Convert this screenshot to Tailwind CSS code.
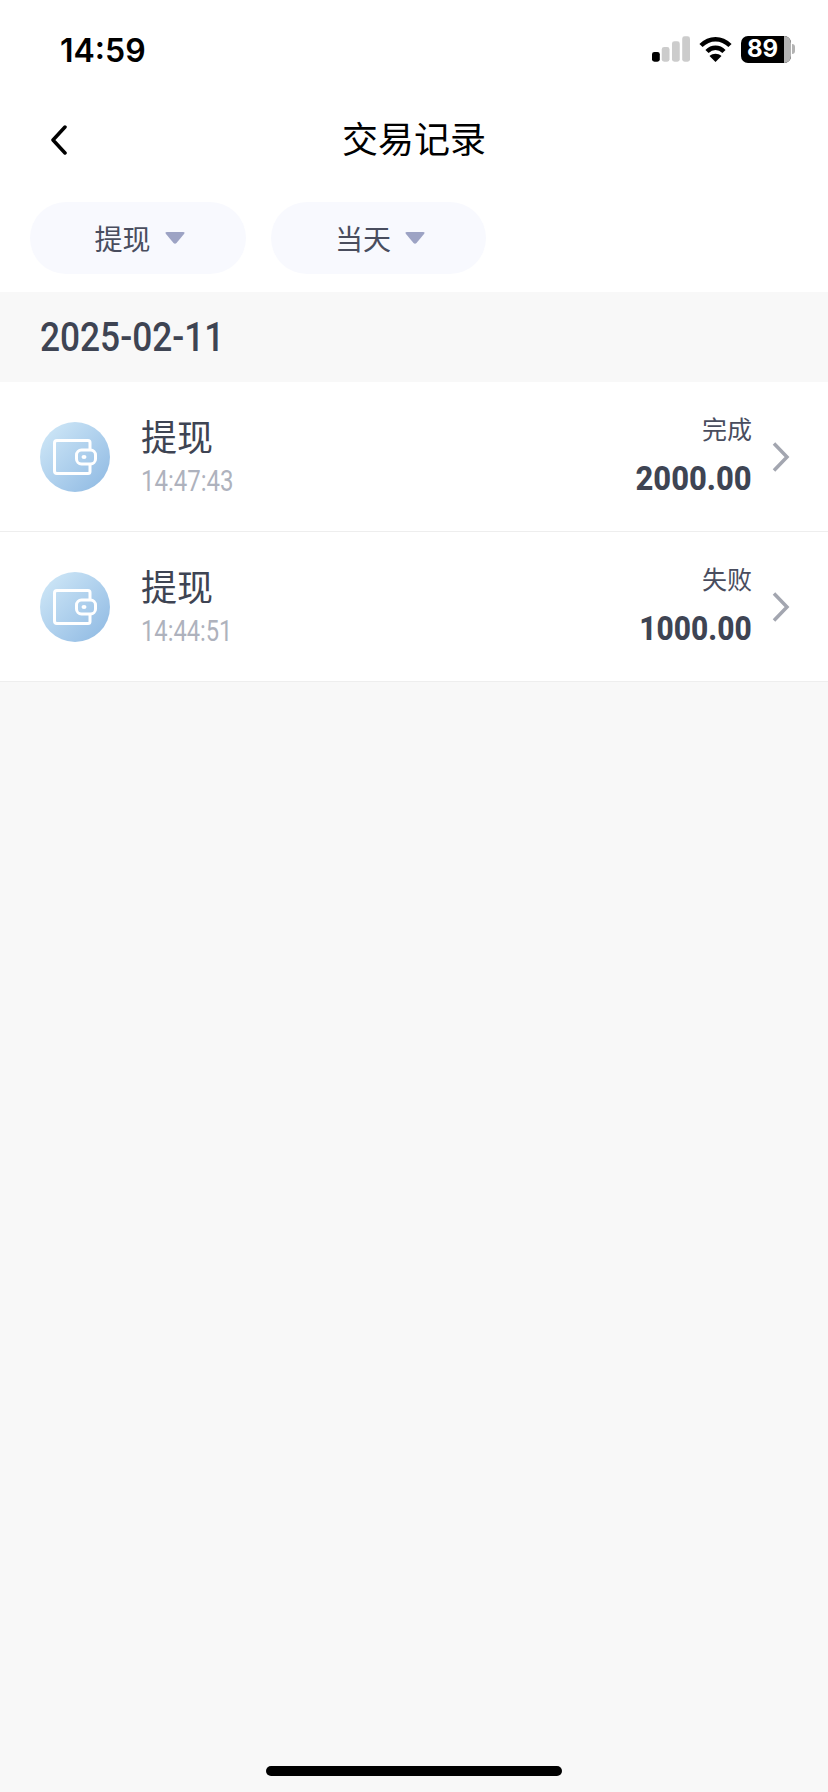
<!DOCTYPE html>
<html lang="zh">
<head>
<meta charset="UTF-8" />
<meta name="viewport" content="width=device-width, initial-scale=1.0" />
<title>交易记录</title>
<script src="https://cdn.jsdelivr.net/npm/@tailwindcss/browser@4"></script>
</head>
<body class="bg-[#f8f8f8] font-['Noto_Sans_CJK_SC',sans-serif]">
<div class="relative w-[828px] h-[1792px] overflow-hidden">
  <div class="bg-white">
    <!-- status bar -->
    <div class="h-[94px] pl-[60px] pr-[33px] flex items-center justify-between">
      <span class="mt-[8px] text-[32px] font-semibold text-black font-['Inter',sans-serif] leading-none">14:59</span>
      <div class="flex items-center gap-[9px] mt-[4px]">
        <svg width="38" height="26" viewBox="0 0 39 26">
          <rect x="0" y="16" width="8" height="10" rx="2.500" fill="#000"/>
          <rect x="10" y="11" width="8" height="15" rx="2.500" fill="#ccc"/>
          <rect x="20.500" y="5" width="8" height="21" rx="2.500" fill="#ccc"/>
          <rect x="31" y="0" width="8" height="26" rx="2.500" fill="#ccc"/>
        </svg>
        <svg width="33" height="26" viewBox="0 0 33 26" fill="none" stroke="#000" stroke-width="4.500">
          <path d="M2 9.500 C10.500 1 22.500 1 31 9.500"/>
          <path d="M8 15.500 C13 10.500 20 10.500 25 15.500"/>
          <path d="M16.500 26 L10.500 20 C14 17 19 17 22.500 20 Z" fill="#000" stroke="none"/>
        </svg>
        <div class="flex items-center">
          <div class="relative w-[50px] h-[27px] rounded-[7px] bg-black flex items-center">
            <div class="absolute right-0 top-0 bottom-0 w-[7px] rounded-r-[7px] bg-[#b3b3b3]"></div>
            <span class="relative pl-[6px] text-[24px] font-bold text-white font-['Inter',sans-serif] leading-none">89</span>
          </div>
          <div class="ml-[1px] w-[3px] h-[10px] rounded-r-full bg-[#b3b3b3]"></div>
        </div>
      </div>
    </div>
    <!-- header -->
    <div class="relative h-[92px] flex items-center justify-center">
      <svg class="absolute left-[49px] top-[31px]" width="20" height="30" viewBox="0 0 20 30" fill="none" stroke="#000" stroke-width="3.500" stroke-linecap="round" stroke-linejoin="round">
        <path d="M16 2 L4 15 L16 28"/>
      </svg>
      <h1 class="mt-[-6px] text-[36px] font-normal text-black leading-none">交易记录</h1>
    </div>
    <!-- filters -->
    <div class="h-[106px] pt-[16px] pl-[30px] flex gap-[25px]">
      <div class="w-[216px] h-[72px] pl-[3px] rounded-[36px] bg-[#f8f9fe] flex items-center justify-center gap-[14px] text-[28px] text-[#494d5e]">
        <span>提现</span>
        <svg width="20" height="12" viewBox="0 0 20 12"><path d="M2 0 H18 Q20.500 0 19 2 L11.500 11 Q10 12.500 8.500 11 L1 2 Q-0.500 0 2 0 Z" fill="#9da3c4"/></svg>
      </div>
      <div class="w-[215px] h-[72px] pl-[3px] rounded-[36px] bg-[#f8f9fe] flex items-center justify-center gap-[14px] text-[28px] text-[#494d5e]">
        <span>当天</span>
        <svg width="20" height="12" viewBox="0 0 20 12"><path d="M2 0 H18 Q20.500 0 19 2 L11.500 11 Q10 12.500 8.500 11 L1 2 Q-0.500 0 2 0 Z" fill="#9da3c4"/></svg>
      </div>
    </div>
  </div>

  <!-- date band -->
  <div class="h-[90px] pl-[40px] flex items-center">
    <span class="text-[41px] font-medium text-[#3e4453] font-['Roboto',sans-serif] leading-none origin-left scale-x-[0.86]">2025-02-11</span>
  </div>

  <!-- rows -->
  <div class="h-[150px] bg-white border-b border-[#eeeeee] pl-[40px] flex items-center">
    <div class="w-[70px] h-[70px] rounded-full bg-gradient-to-br from-[#d3eaf8] to-[#8db8e2] flex items-center justify-center">
      <svg width="44" height="36" viewBox="0 0 44 36" fill="none" stroke="#fff" stroke-width="3" stroke-linejoin="round">
        <path d="M37 10 V3.500 Q37 1.500 35 1.500 H4 Q1.500 1.500 1.500 4 V32 Q1.500 34.500 4 34.500 H35 Q37 34.500 37 32.500 V25"/>
        <rect x="23.500" y="11" width="19" height="14" rx="5"/>
        <ellipse cx="31" cy="18" rx="2.500" ry="2" fill="#fff" stroke="none"/>
      </svg>
    </div>
    <div class="ml-[31px] w-[200px] mt-[-1px]">
      <div class="text-[36px] text-[#3e4453] leading-none">提现</div>
      <div class="mt-[13px] text-[30px] text-[#aeb2bd] font-['Roboto',sans-serif] leading-none origin-left scale-x-[0.80]">14:47:43</div>
    </div>
    <div class="ml-auto flex flex-col items-end">
      <div class="mt-[-3px] text-[25px] text-[#494d5e] leading-none">完成</div>
      <div class="mt-[20px] text-[34px] font-extrabold text-[#3e4453] font-['Roboto',sans-serif] leading-none origin-right scale-x-[0.91]">2000.00</div>
    </div>
    <svg class="ml-[20px] mr-[38px]" width="18" height="30" viewBox="0 0 18 30" fill="none" stroke="#a3a6b0" stroke-width="3.500">
      <path d="M2 1.500 L15 15 L2 28.500"/>
    </svg>
  </div>
  <div class="h-[150px] bg-white border-b border-[#eeeeee] pl-[40px] flex items-center">
    <div class="w-[70px] h-[70px] rounded-full bg-gradient-to-br from-[#d3eaf8] to-[#8db8e2] flex items-center justify-center">
      <svg width="44" height="36" viewBox="0 0 44 36" fill="none" stroke="#fff" stroke-width="3" stroke-linejoin="round">
        <path d="M37 10 V3.500 Q37 1.500 35 1.500 H4 Q1.500 1.500 1.500 4 V32 Q1.500 34.500 4 34.500 H35 Q37 34.500 37 32.500 V25"/>
        <rect x="23.500" y="11" width="19" height="14" rx="5"/>
        <ellipse cx="31" cy="18" rx="2.500" ry="2" fill="#fff" stroke="none"/>
      </svg>
    </div>
    <div class="ml-[31px] w-[200px] mt-[-1px]">
      <div class="text-[36px] text-[#3e4453] leading-none">提现</div>
      <div class="mt-[13px] text-[30px] text-[#aeb2bd] font-['Roboto',sans-serif] leading-none origin-left scale-x-[0.79]">14:44:51</div>
    </div>
    <div class="ml-auto flex flex-col items-end">
      <div class="mt-[-3px] text-[25px] text-[#494d5e] leading-none">失败</div>
      <div class="mt-[20px] text-[34px] font-extrabold text-[#3e4453] font-['Roboto',sans-serif] leading-none origin-right scale-x-[0.88]">1000.00</div>
    </div>
    <svg class="ml-[20px] mr-[38px]" width="18" height="30" viewBox="0 0 18 30" fill="none" stroke="#a3a6b0" stroke-width="3.500">
      <path d="M2 1.500 L15 15 L2 28.500"/>
    </svg>
  </div>

  <!-- home indicator -->
  <div class="absolute left-[266px] bottom-[16px] w-[296px] h-[10px] rounded-full bg-black"></div>
</div>
</body>
</html>
